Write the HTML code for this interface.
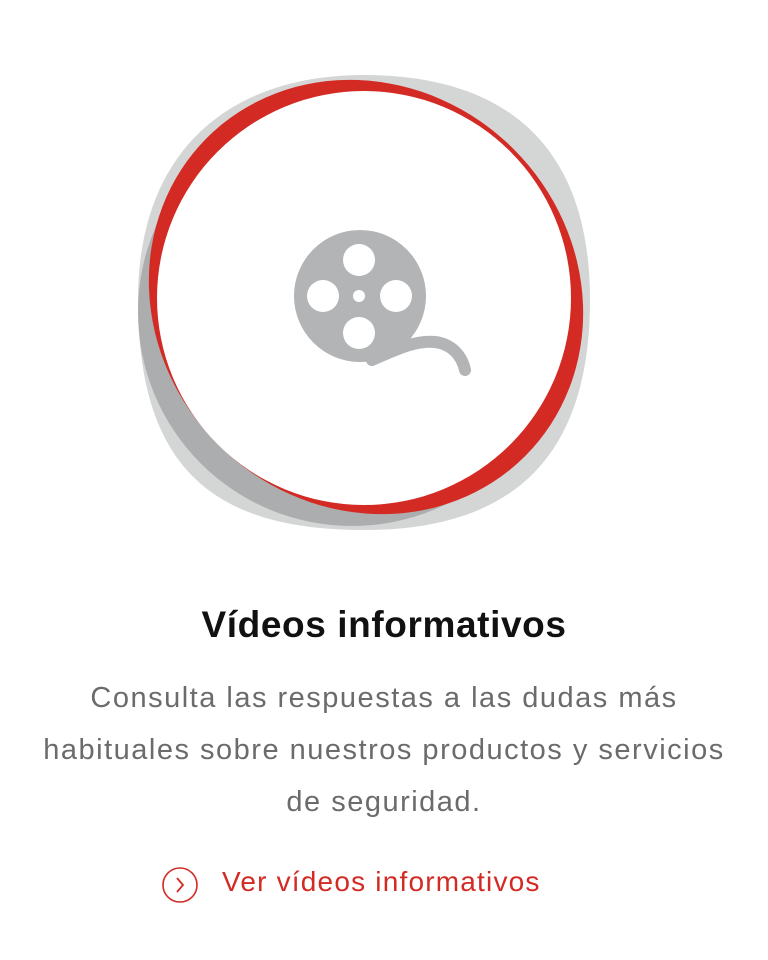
<!DOCTYPE html>
<html><head><meta charset="utf-8"><style>
html,body{margin:0;padding:0;background:#fff;width:768px;height:960px;overflow:hidden}
h1{position:absolute;top:604px;left:0;width:768px;margin:0;text-align:center;font:bold 37px "Liberation Sans",sans-serif;color:#111;letter-spacing:0.6px}
p{position:absolute;top:672px;left:0;width:768px;margin:0;text-align:center;font:29px/52px "Liberation Sans",sans-serif;color:#6b6b6b;letter-spacing:1.5px}
.l{position:absolute;top:866px;font:28px "Liberation Sans",sans-serif;color:#d32a24;white-space:nowrap;letter-spacing:1.2px}
</style></head><body>
<svg width="768" height="560" style="position:absolute;left:0;top:0">
<path d="M364 75 C500 75 590 140 590 300 C590 460 510 530 364 530 C215 530 138 470 138 300 C138 150 230 75 364 75Z" fill="#d4d5d5"/>
<ellipse cx="352" cy="312" rx="214" ry="214" fill="#acadaf"/>
<ellipse cx="366" cy="297" rx="225" ry="209" transform="rotate(45 366 297)" fill="#d32a24"/>
<circle cx="364" cy="298" r="207" fill="#fff"/>
<path d="M372 360 C395 350 415 340 435 342 C452 344 462 356 465 370" fill="none" stroke="#b3b4b6" stroke-width="12" stroke-linecap="round"/>
<circle cx="360" cy="296" r="66" fill="#b3b4b6"/>
<g fill="#fff"><circle cx="359" cy="260" r="16"/><circle cx="323" cy="296" r="16"/><circle cx="396" cy="296" r="16"/><circle cx="359" cy="333" r="16"/><circle cx="359" cy="296" r="6"/></g>
</svg>
<h1>Vídeos informativos</h1>
<p>Consulta las respuestas a las dudas más<br>habituales sobre nuestros productos y servicios<br>de seguridad.</p>
<svg width="38" height="38" style="position:absolute;left:161px;top:866px"><circle cx="19" cy="19" r="17" fill="none" stroke="#d32a24" stroke-width="1.6"/><path d="M16 12 L22 19 L16 26" fill="none" stroke="#d32a24" stroke-width="1.8"/></svg>
<div class="l" style="left:222px">Ver vídeos informativos</div>
</body></html>
